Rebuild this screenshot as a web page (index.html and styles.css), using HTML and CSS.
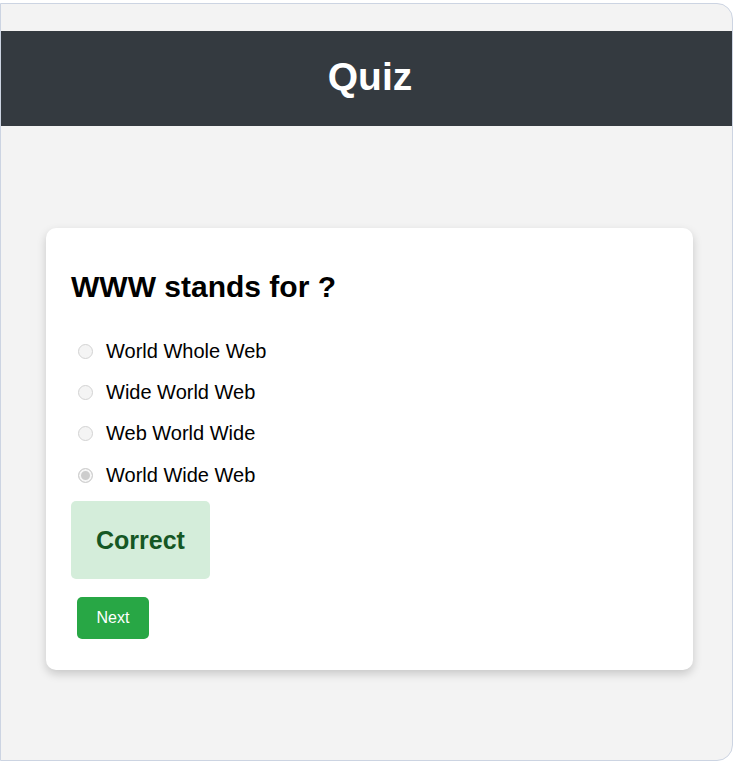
FILE: index.html
```html
<!DOCTYPE html>
<html lang="en">
<head>
<meta charset="utf-8">
<title>Quiz</title>
<link rel="stylesheet" href="styles.css">
</head>
<body>
<div class="frame">
  <header class="header"><h1 class="title">Quiz</h1></header>
  <main class="card">
    <h2 class="question">WWW stands for ?</h2>
    <div class="options">
      <label class="option"><input class="radio" type="radio" name="q" disabled><span>World Whole Web</span></label>
      <label class="option"><input class="radio" type="radio" name="q" disabled><span>Wide World Web</span></label>
      <label class="option"><input class="radio" type="radio" name="q" disabled><span>Web World Wide</span></label>
      <label class="option"><input class="radio" type="radio" name="q" checked disabled><span>World Wide Web</span></label>
    </div>
    <div class="result">Correct</div>
    <button class="next" type="button">Next</button>
  </main>
</div>
</body>
</html>
```
FILE: styles.css
```css
* { box-sizing: border-box; }
html, body { margin: 0; padding: 0; background: #ffffff; }
body { font-family: "Liberation Sans", Arial, sans-serif; color: #000; }

.frame {
  margin-top: 3px;
  height: 758px;
  width: 733px;
  background: #f3f3f3;
  border: 1px solid #ccd4e2;
  border-radius: 0 16px 16px 0;
  padding-top: 27px;
  overflow: hidden;
}

.header {
  background: #343a40;
  height: 95px;
  padding-top: 24px;
}
.title {
  margin: 0;
  text-align: center;
  color: #ffffff;
  font-size: 39px;
  line-height: 44px;
  font-weight: bold;
  padding-left: 7px;
}

.card {
  margin: 102px 0 0 45px;
  width: 647px;
  background: #ffffff;
  border-radius: 10px;
  box-shadow: 0 4px 10px rgba(0, 0, 0, 0.18);
  padding: 25px 25px 31px;
  display: flex;
  flex-direction: column;
  align-items: flex-start;
}

.question {
  margin: 17px 0 0;
  font-size: 30px;
  line-height: 34px;
  font-weight: bold;
}

.options {
  margin-top: 36px;
  display: flex;
  flex-direction: column;
  gap: 18.2px;
}
.option {
  display: flex;
  align-items: center;
  gap: 13px;
  padding-left: 7px;
  font-size: 20px;
  line-height: 23px;
}
.radio {
  -webkit-appearance: none;
  appearance: none;
  margin: 0;
  width: 15px;
  height: 15px;
  border: 1px solid #d3d3d3;
  border-radius: 50%;
  background: #f4f4f4;
}
.radio:checked {
  background: #cdcdcd;
  box-shadow: inset 0 0 0 2px #f7f7f7;
  border-color: #cfcfcf;
}

.result {
  margin-top: 14px;
  background: #d4edda;
  color: #155724;
  font-size: 25px;
  line-height: 30px;
  font-weight: bold;
  padding: 24px 25px;
  border-radius: 5px;
}

.next {
  margin: 18px 0 0 6px;
  background: #28a745;
  color: #ffffff;
  border: none;
  border-radius: 5px;
  font-family: "Liberation Sans", Arial, sans-serif;
  font-size: 16px;
  line-height: 18px;
  padding: 12px 19.5px;
}
```
